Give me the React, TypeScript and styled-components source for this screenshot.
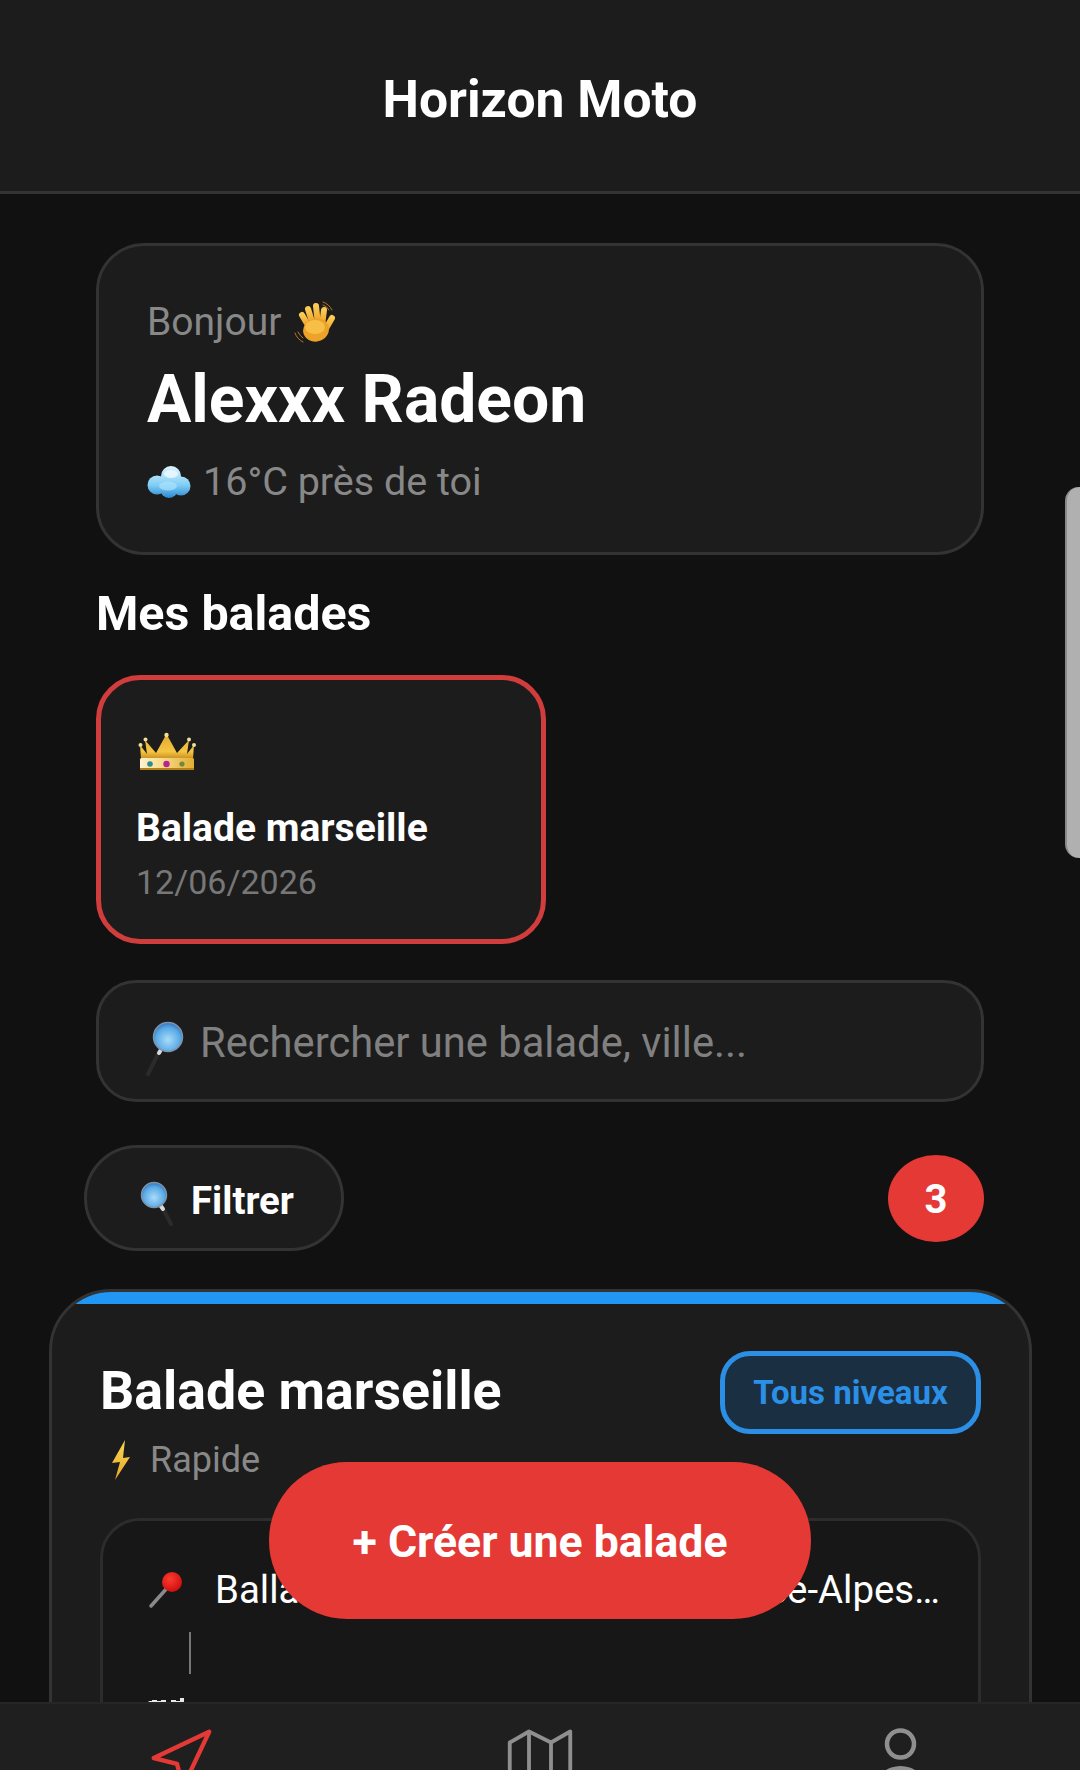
import React from "react";
import styled, { createGlobalStyle } from "styled-components";

const GlobalStyle = createGlobalStyle`
  html, body {
    margin: 0;
    padding: 0;
    height: 1770px;
    overflow: hidden;
    background: #111111;
    font-family: Roboto, "Liberation Sans", sans-serif;
  }
  * { box-sizing: border-box; }
`;

// the screenshot's emoji come from a phone font, so they are drawn by hand here
const WaveHand = () => (
  <svg width="43" height="43" viewBox="0 0 43 43" fill="none" strokeLinecap="round">
    <defs>
      <linearGradient id="handFill" x1="0" y1="0" x2="0" y2="1">
        <stop offset="0" stopColor="#fbcb52" />
        <stop offset="1" stopColor="#ea9a22" />
      </linearGradient>
    </defs>
    <g stroke="url(#handFill)" strokeWidth="6">
      <path d="M17 26 L10 14" />
      <path d="M21 24 L16 8" />
      <path d="M26 24 L24 5" />
      <path d="M30 25 L32 9" />
      <path d="M32 31 L40 17" />
    </g>
    <ellipse cx="24" cy="29" rx="13" ry="11.5" transform="rotate(-15 24 29)" fill="#eda22a" />
    <ellipse cx="23" cy="26" rx="10" ry="7" fill="#f8bf47" />
    <g stroke="#b9781f" strokeWidth="1">
      <path d="M3 32 Q5 38 11 41" />
      <path d="M6 31 Q8 35 11 37" />
      <path d="M31 1 Q37 3 40 9" />
      <path d="M31 4 Q35 5 37 9" />
    </g>
  </svg>
);

const PuffCloud = () => (
  <svg width="44" height="32" viewBox="0 0 44 32">
    <defs>
      <linearGradient id="cloudFill" gradientUnits="userSpaceOnUse" x1="0" y1="0" x2="0" y2="32">
        <stop offset="0" stopColor="#dff5ff" />
        <stop offset="0.6" stopColor="#7fcdf4" />
        <stop offset="1" stopColor="#2a88d2" />
      </linearGradient>
    </defs>
    <g fill="url(#cloudFill)">
      <circle cx="24" cy="10" r="10" />
      <circle cx="10" cy="19" r="9.5" />
      <circle cx="34" cy="20" r="9.5" />
      <circle cx="22" cy="23" r="9" />
    </g>
    <ellipse cx="24" cy="8" rx="7" ry="4" fill="#eefaff" opacity="0.8" />
    <ellipse cx="21" cy="20" rx="9" ry="4.5" fill="#a9e3fc" opacity="0.7" />
  </svg>
);

const CrownMark = () => (
  <svg width="59" height="38" viewBox="0 0 59 38">
    <defs>
      <linearGradient id="crownFill" x1="0" y1="0" x2="0" y2="1">
        <stop offset="0" stopColor="#e3a92b" />
        <stop offset="0.7" stopColor="#f4c544" />
        <stop offset="1" stopColor="#c98d1d" />
      </linearGradient>
      <linearGradient id="bandFill" x1="0" y1="0" x2="1" y2="0">
        <stop offset="0" stopColor="#fdf3d3" />
        <stop offset="0.4" stopColor="#f7dc8a" />
        <stop offset="1" stopColor="#e3ad33" />
      </linearGradient>
    </defs>
    <path
      d="M3 27 L2 13 L9 22 L7 8 L18 21 L28.5 2 L39 21 L51 8 L49 22 L56 13 L55 27 Z"
      fill="url(#crownFill)"
    />
    <rect x="2" y="26" width="54" height="11" rx="1.5" fill="url(#bandFill)" />
    <rect x="2" y="36" width="54" height="2" fill="#b57f1a" />
    <circle cx="2.5" cy="13" r="2" fill="#f1dd9c" />
    <circle cx="7.5" cy="7.5" r="2" fill="#f1dd9c" />
    <circle cx="28.5" cy="3" r="2.2" fill="#f1dd9c" />
    <circle cx="51" cy="7.5" r="2" fill="#f1dd9c" />
    <circle cx="56" cy="13" r="2" fill="#f1dd9c" />
    <circle cx="12" cy="32" r="2.8" fill="#2d8c8c" />
    <circle cx="28.5" cy="32" r="3.2" fill="#b5239b" />
    <circle cx="44" cy="32" r="2.6" fill="#6f8a3c" />
  </svg>
);

const LensDefs = ({ id }: { id: string }) => (
  <defs>
    <radialGradient id={id} cx="0.5" cy="0.6" r="0.6">
      <stop offset="0" stopColor="#a9dcf8" />
      <stop offset="0.7" stopColor="#5aa9e6" />
      <stop offset="1" stopColor="#2f74bf" />
    </radialGradient>
  </defs>
);

const SearchGlass = () => (
  <svg width="39" height="56" viewBox="0 0 39 56" fill="none" strokeLinecap="round">
    <LensDefs id="lensLeft" />
    <path d="M15 30 L3 54" stroke="#2b2b2b" strokeWidth="4" />
    <path d="M17 28 L14 33" stroke="#d8d8d8" strokeWidth="4" />
    <circle cx="23" cy="17" r="14.5" fill="url(#lensLeft)" stroke="#7d93a8" strokeWidth="1.5" />
  </svg>
);

const FilterGlass = () => (
  <svg width="34" height="45" viewBox="0 0 34 45" fill="none" strokeLinecap="round">
    <LensDefs id="lensRight" />
    <path d="M22 26 L31 43" stroke="#2b2b2b" strokeWidth="4" />
    <path d="M20 24 L23 28" stroke="#d8d8d8" strokeWidth="4" />
    <circle cx="14" cy="14" r="12.5" fill="url(#lensRight)" stroke="#7d93a8" strokeWidth="1.5" />
  </svg>
);

const Bolt = () => (
  <svg width="18" height="40" viewBox="0 0 18 40">
    <defs>
      <linearGradient id="boltFill" x1="0" y1="0" x2="0" y2="1">
        <stop offset="0" stopColor="#f9d65a" />
        <stop offset="1" stopColor="#e8a823" />
      </linearGradient>
    </defs>
    <polygon points="13,0 0,23 8,22 3,40 18,17 11,18" fill="url(#boltFill)" />
  </svg>
);

const RoundPin = () => (
  <svg width="35" height="38" viewBox="0 0 35 38" fill="none">
    <defs>
      <radialGradient id="pinFill" cx="0.4" cy="0.35" r="0.7">
        <stop offset="0" stopColor="#ff3b30" />
        <stop offset="1" stopColor="#c90d0d" />
      </radialGradient>
    </defs>
    <path d="M20 16 L3 35" stroke="#8a8a8a" strokeWidth="3.5" strokeLinecap="round" />
    <circle cx="24" cy="11" r="10" fill="url(#pinFill)" />
  </svg>
);

const RaceFlag = () => (
  <svg width="38" height="38" viewBox="0 0 38 38">
    <path d="M0 3 h4 v-1 h5 v1 h4 v-1 h5 v2 h5 v-2 h5 v1 h4 v-3 h4 v6 h-32 Z" fill="#e8e8e8" />
  </svg>
);

const App = () => (
  <>
    <GlobalStyle />
    <Header>
      <AppTitle>Horizon Moto</AppTitle>
    </Header>
    <Main>
      <GreetingCard>
        <Hello>
          Bonjour <WaveHand />
        </Hello>
        <UserName>Alexxx Radeon</UserName>
        <Weather>
          <PuffCloud /> 16°C près de toi
        </Weather>
      </GreetingCard>

      <SectionTitle>Mes balades</SectionTitle>
      <MyRideCard>
        <Crown>
          <CrownMark />
        </Crown>
        <MyRideName>Balade marseille</MyRideName>
        <MyRideDate>12/06/2026</MyRideDate>
      </MyRideCard>

      <SearchBox>
        <GlassSlot $drop={14}>
          <SearchGlass />
        </GlassSlot>
        <SearchText>Rechercher une balade, ville...</SearchText>
      </SearchBox>

      <FilterRow>
        <FilterButton>
          <GlassSlot $drop={11}>
            <FilterGlass />
          </GlassSlot>
          <FilterLabel>Filtrer</FilterLabel>
        </FilterButton>
        <CountBadge>3</CountBadge>
      </FilterRow>

      <RideCard>
        <BlueBar />
        <RideBody>
          <RideTop>
            <RideTitle>Balade marseille</RideTitle>
            <LevelTag>Tous niveaux</LevelTag>
          </RideTop>
          <RideSpeed>
            <Bolt /> Rapide
          </RideSpeed>
          <RouteBox>
            <RouteRow>
              <RoundPin />
              <RouteText>Ballancourt-sur-Essonne, Provence-Alpes…</RouteText>
            </RouteRow>
            <RouteLine />
            <RouteRow>
              <RaceFlag />
            </RouteRow>
          </RouteBox>
        </RideBody>
      </RideCard>
    </Main>

    <EdgeHandle />
    <CreateButton>+ Créer une balade</CreateButton>

    <BottomNav>
      <NavItem>
        <svg width="70" height="70" viewBox="0 0 24 24" fill="none" stroke="#e53935" strokeWidth="1.5" strokeLinejoin="round">
          <polygon points="3 11 22 2 13 21 11 13 3 11" />
        </svg>
      </NavItem>
      <NavItem>
        <svg width="66" height="66" viewBox="0 0 24 24" fill="none" stroke="#8f8f8f" strokeWidth="1.4" strokeLinejoin="round">
          <polygon points="1 6 1 22 8 18 16 22 23 18 23 2 16 6 8 2 1 6" />
          <line x1="8" y1="2" x2="8" y2="18" />
          <line x1="16" y1="6" x2="16" y2="22" />
        </svg>
      </NavItem>
      <NavItem>
        <svg width="69" height="69" viewBox="0 0 69 69">
          <circle cx="34.5" cy="18" r="13.5" fill="none" stroke="#8f8f8f" strokeWidth="4.5" />
          <ellipse cx="34.5" cy="60" rx="24" ry="20" fill="#8f8f8f" />
        </svg>
      </NavItem>
    </BottomNav>
  </>
);

export default App;

const Header = styled.header`
  height: 194px;
  padding-top: 8px;
  background: #1c1c1c;
  border-bottom: 3px solid #333333;
  display: flex;
  align-items: center;
  justify-content: center;
`;

const AppTitle = styled.h1`
  margin: 0;
  color: #ffffff;
  font-size: 51.6px;
  font-weight: 700;
`;

const Main = styled.main`
  height: 1576px;
  overflow: hidden;
  padding: 49px 96px 0;
`;

const GreetingCard = styled.section`
  height: 312px;
  background: #1c1c1c;
  border: 3px solid #333333;
  border-radius: 48px;
  padding: 54px 48px 0;
`;

const Hello = styled.div`
  color: #888888;
  font-size: 39px;
  line-height: 44px;
  display: flex;
  align-items: center;
  gap: 11px;
`;

const UserName = styled.div`
  color: #ffffff;
  font-size: 66px;
  font-weight: 700;
  line-height: 78px;
  margin-top: 17px;
`;

const Weather = styled.div`
  color: #888888;
  font-size: 39.5px;
  line-height: 44px;
  margin-top: 21px;
  display: flex;
  align-items: center;
  gap: 12px;
`;

const SectionTitle = styled.h2`
  margin: 33px 0 0;
  color: #ffffff;
  font-size: 48.4px;
  font-weight: 700;
  line-height: 52px;
`;

const MyRideCard = styled.div`
  width: 450px;
  height: 269px;
  margin-top: 35px;
  background: #1c1c1c;
  border: 5px solid #d13c3c;
  border-radius: 44px;
  padding: 52px 35px 0;
`;

const Crown = styled.div`
  height: 38px;
  margin-left: 2px;
`;

const MyRideName = styled.div`
  color: #ffffff;
  font-size: 39px;
  font-weight: 700;
  line-height: 44px;
  margin-top: 36px;
`;

const MyRideDate = styled.div`
  color: #777777;
  font-size: 34px;
  line-height: 40px;
  margin-top: 12px;
`;

const SearchBox = styled.div`
  height: 122px;
  margin-top: 36px;
  background: #1c1c1c;
  border: 3px solid #333333;
  border-radius: 40px;
  padding: 0 46px;
  display: flex;
  align-items: center;
  gap: 16px;
`;

const GlassSlot = styled.span<{ $drop: number }>`
  display: flex;
  margin-top: ${(props) => props.$drop}px;
`;

const SearchText = styled.span`
  color: #808080;
  font-size: 41.7px;
  margin-top: 3px;
`;

const FilterRow = styled.div`
  margin-top: 43px;
  margin-left: -12px;
  display: flex;
  align-items: center;
  justify-content: space-between;
`;

const FilterButton = styled.div`
  width: 260px;
  height: 106px;
  background: #1c1c1c;
  border: 3px solid #333333;
  border-radius: 53px;
  padding-left: 53px;
  color: #ffffff;
  font-size: 38.4px;
  font-weight: 700;
  display: flex;
  align-items: center;
  gap: 17px;
`;

const FilterLabel = styled.span`
  margin-top: 4px;
`;

const CountBadge = styled.div`
  width: 96px;
  height: 87px;
  padding-top: 3px;
  border-radius: 50%;
  background: #e53935;
  color: #ffffff;
  font-size: 40px;
  font-weight: 700;
  display: flex;
  align-items: center;
  justify-content: center;
`;

const RideCard = styled.article`
  margin: 38px -48px 0 -47px;
  background: #1c1c1c;
  border: 3px solid #333333;
  border-radius: 62px;
  overflow: hidden;
  height: 600px;
`;

const BlueBar = styled.div`
  height: 12px;
  background: #2196f3;
`;

const RideBody = styled.div`
  padding: 47px 48px 0;
`;

const RideTop = styled.div`
  display: flex;
  align-items: center;
  justify-content: space-between;
`;

const RideTitle = styled.div`
  color: #ffffff;
  font-size: 53.7px;
  font-weight: 700;
  margin-bottom: 4px;
`;

const LevelTag = styled.div`
  width: 261px;
  height: 83px;
  background: #1b2f42;
  border: 5px solid #2b8fe6;
  border-radius: 30px;
  color: #2b8fe6;
  font-size: 33px;
  font-weight: 700;
  display: flex;
  align-items: center;
  justify-content: center;
`;

const RideSpeed = styled.div`
  color: #888888;
  font-size: 36px;
  line-height: 44px;
  margin-top: 4px;
  padding-left: 12px;
  display: flex;
  align-items: center;
  gap: 20px;
`;

const RouteBox = styled.div`
  margin-top: 36px;
  height: 400px;
  background: #171717;
  border: 3px solid #2c2c2c;
  border-radius: 40px;
  padding: 47px 45px 0;
`;

const RouteRow = styled.div`
  display: flex;
  align-items: center;
  gap: 32px;
  color: #ffffff;
  font-size: 38.4px;
  line-height: 44px;

  svg {
    flex-shrink: 0;
  }
`;

const RouteText = styled.span`
  white-space: nowrap;
`;

const RouteLine = styled.div`
  width: 2px;
  height: 42px;
  margin: 20px 0 24px 41px;
  background: #777777;
`;

const EdgeHandle = styled.div`
  position: fixed;
  top: 487px;
  right: 0;
  width: 15px;
  height: 371px;
  background: #b0b0b0;
  border-left: 2px solid #8a8a8a;
  border-radius: 14px 0 0 14px;
`;

const CreateButton = styled.button`
  position: fixed;
  left: 269px;
  top: 1462px;
  width: 542px;
  height: 157px;
  padding: 3px 0 0;
  border: none;
  border-radius: 78px;
  background: #e53935;
  color: #ffffff;
  font-family: inherit;
  font-size: 44.6px;
  font-weight: 700;
`;

const BottomNav = styled.nav`
  position: fixed;
  left: 0;
  right: 0;
  top: 1702px;
  height: 68px;
  overflow: hidden;
  background: #1f1f1f;
  border-top: 2px solid #262626;
  display: grid;
  grid-template-columns: repeat(3, 1fr);
`;

const NavItem = styled.div`
  display: flex;
  justify-content: center;
  padding-top: 22px;
`;
